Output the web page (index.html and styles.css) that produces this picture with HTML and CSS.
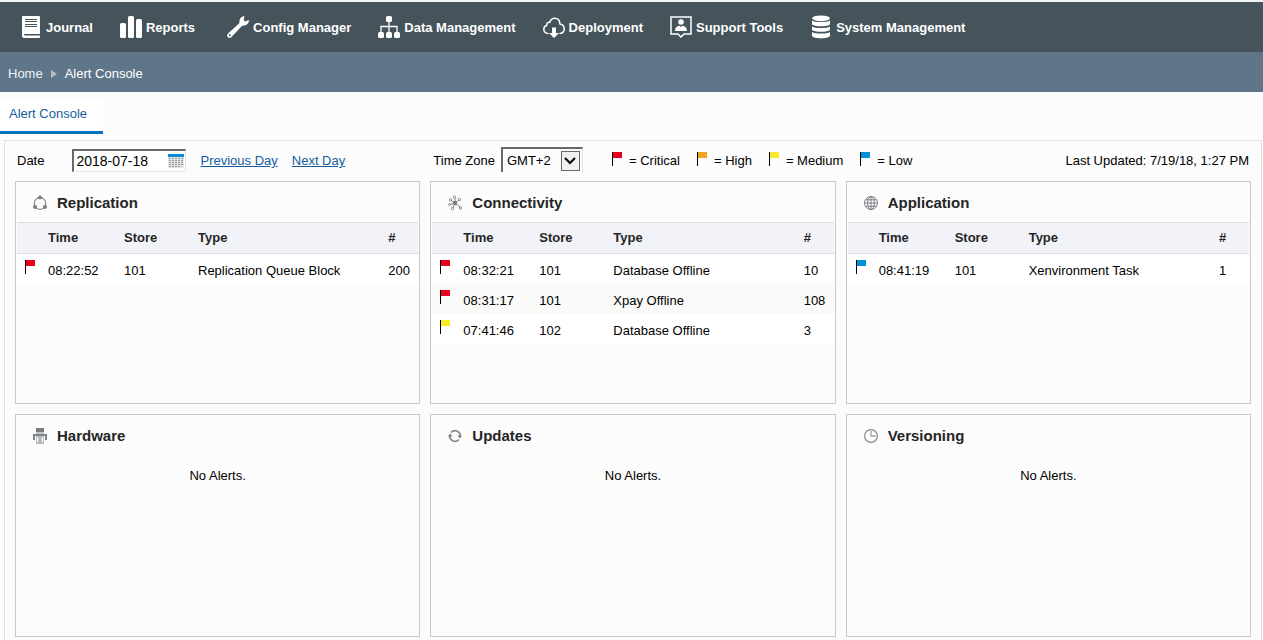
FILE: index.html
```html
<!DOCTYPE html>
<html lang="en">
<head>
    <meta charset="UTF-8">
    <meta name="viewport" content="width=device-width, initial-scale=1.0">
    <title>Alert Console</title>
    <link rel="stylesheet" href="styles.css">
</head>
<body>
    <!-- Main menu -->
    <nav class="main-nav">
        <a href="#">
            <svg width="22" height="22" viewBox="0 0 22 22"><path fill="#fff" d="M3 0h16a1 1 0 0 1 1 1v17H5v1.500h15V21a1 1 0 0 1-1 1H4a2 2 0 0 1-2-2V1a1 1 0 0 1 1-1z"/><path stroke="#45535b" d="M5 3.500h12M5 5.500h12M5 8.500h12M5 10.500h12M4 18.500h16"/></svg>
            <span>Journal</span>
        </a>
        <a href="#">
            <svg width="22" height="22" viewBox="0 0 22 22"><g fill="#fff"><rect y="7" width="6" height="15" rx="1.500"/><rect x="8" width="6" height="22" rx="1.500"/><rect x="16" y="3" width="6" height="19" rx="1.500"/></g></svg>
            <span>Reports</span>
        </a>
        <a href="#" class="wide">
            <svg width="22" height="22" viewBox="0 0 22 22"><path fill="#fff" d="M17.500 0l-.8 4 1.300 1.600 3.800-1.500c.5 2.500-1.600 5.400-4.800 5.300-1 0-1.700.2-2.400.9L5 20.600c-1 1.200-2.500 1.700-3.900.8-1.400-1.200-1.200-2.900 0-4L11.700 7.800c.7-.7.8-1.300.8-2.300C12.400 2.200 15 .1 17.500 0z"/><circle cx="2.800" cy="19.300" r="1" fill="#45535b"/></svg>
            <span>Config Manager</span>
        </a>
        <a href="#">
            <svg width="22" height="22" viewBox="0 0 22 22"><g fill="#fff"><rect x="8" width="6" height="6" rx="1.500"/><rect y="16" width="6" height="6" rx="1.500"/><rect x="8" y="16" width="6" height="6" rx="1.500"/><rect x="16" y="16" width="6" height="6" rx="1.500"/></g><path fill="none" stroke="#fff" stroke-width="1.300" d="M11 5v11M3 16v-5.500h16V16"/></svg>
            <span>Data Management</span>
        </a>
        <a href="#">
            <svg width="22" height="22" viewBox="0 0 22 22"><path fill="none" stroke="#fff" stroke-width="1.500" stroke-linecap="round" d="M5 17.500C2.500 17.600.8 15.600.8 13.300c0-2.200 1.300-3.600 2.900-3.900C3.400 7.400 4.800 6 6.800 6.300 7.600 3.500 9.400 2.300 11.800 2.300c3.200 0 5.200 2.200 5.100 5.600 2.500.4 4.300 2.300 4.300 4.900 0 2.700-1.800 4.500-4.200 4.700"/><path fill="#fff" d="M9 11.500h4V17h3l-5 5-5-5h3z"/></svg>
            <span>Deployment</span>
        </a>
        <a href="#">
            <svg width="22" height="22" viewBox="0 0 22 22"><path fill="none" stroke="#fff" stroke-width="1.500" d="M1 1h20v17h-7l-3 3-3-3H1z"/><circle cx="11" cy="6" r="2.800" fill="#fff"/><path fill="#fff" d="M5 15c0-3.500 2-4.600 4.500-5.200L11 11l1.500-1.200C15 10.400 17 11.500 17 15z"/></svg>
            <span>Support Tools</span>
        </a>
        <a href="#">
            <svg width="22" height="24" viewBox="0 0 22 24"><g fill="#fff"><ellipse cx="11" cy="3.300" rx="9" ry="2.900"/><path d="M2 5.500c3 2 15 2 18 0v3.700c-2 2.700-16 2.700-18 0zM2 11.500c3 2 15 2 18 0v3.200c-2 2.700-16 2.700-18 0zM2 17c3 2 15 2 18 0v4c-2 3.200-16 3.200-18 0z"/></g></svg>
            <span>System Management</span>
        </a>
    </nav>

    <div class="breadcrumb">
        <a href="#">Home</a>
        <svg width="6" height="8" viewBox="0 0 6 8"><path fill="#bcbcbc" d="M0 0l6 4-6 4z"/></svg>
        <span>Alert Console</span>
    </div>

    <div class="tabs">
        <a href="#" class="tab">Alert Console</a>
    </div>

    <main class="panel">
        <!-- Filters and legend -->
        <div class="toolbar">
            <div class="toolbar-date">
                <label for="date">Date</label>
                <div class="date-field">
                    <input type="text" id="date" value="2018-07-18">
                    <button type="button" aria-label="Calendar">
                        <svg width="16" height="14" viewBox="0 0 16 14"><path fill="#e4e4e4" d="M0 3h16v11H0z"/><path stroke="#999" stroke-dasharray="2 1" d="M1 4.500h14M1 6.500h14M1 8.500h14M1 10.500h14M1 12.500h11"/><path fill="#0a8bd6" d="M0 0h16v3H0z"/></svg>
                    </button>
                </div>
                <a href="#">Previous Day</a>
                <a href="#">Next Day</a>
            </div>
            <div class="toolbar-info">
                <label for="timezone">Time Zone</label>
                <div class="select-field">
                    <select id="timezone">
                        <option>GMT+2</option>
                    </select>
                    <span class="select-arrow">
                        <svg width="12" height="8" viewBox="0 0 12 8"><path fill="none" stroke="#000" stroke-width="2" d="M1 1l5 5 5-5"/></svg>
                    </span>
                </div>
                <ul class="legend">
                    <li><span class="flag critical"></span>= Critical</li>
                    <li><span class="flag high"></span>= High</li>
                    <li><span class="flag medium"></span>= Medium</li>
                    <li><span class="flag low"></span>= Low</li>
                </ul>
                <span class="updated">Last Updated: 7/19/18, 1:27 PM</span>
            </div>
        </div>

        <!-- Alert cards -->
        <div class="cards">
            <section class="card">
                <h2>
                    <svg width="14" height="16" viewBox="0 0 14 16"><circle cx="7" cy="8.500" r="5.800" fill="none" stroke="#8a8e92" stroke-width="1.300"/><g fill="#777c81"><circle cx="7" cy="2.500" r="2"/><circle cx="2" cy="12" r="2"/><circle cx="12" cy="12" r="2"/></g></svg>
                    Replication
                </h2>
                <table>
                    <thead>
                        <tr><th class="col-flag"></th><th class="col-time">Time</th><th class="col-store">Store</th><th>Type</th><th class="col-count">#</th></tr>
                    </thead>
                    <tbody>
                        <tr><td><span class="flag critical"></span></td><td>08:22:52</td><td>101</td><td>Replication Queue Block</td><td>200</td></tr>
                    </tbody>
                </table>
            </section>

            <section class="card">
                <h2>
                    <svg width="14" height="16" viewBox="0 0 14 16"><g fill="none" stroke="#85898d"><path d="M7 8L3 5.500M7 8V3M7 8l4-3M7 8l-5 1.500M7 8l-2 5M7 8l5 4"/><circle cx="2.500" cy="5" r="1.200"/><circle cx="6.500" cy="2.300" r="1.200"/><circle cx="11.500" cy="4.500" r="1.200"/><circle cx="1.500" cy="9.500" r="1"/><circle cx="4.500" cy="13.500" r="1.200"/><circle cx="12.500" cy="13" r="1.200"/></g><circle cx="7" cy="8" r="2.200" fill="#777c81"/></svg>
                    Connectivity
                </h2>
                <table>
                    <thead>
                        <tr><th class="col-flag"></th><th class="col-time">Time</th><th class="col-store">Store</th><th>Type</th><th class="col-count">#</th></tr>
                    </thead>
                    <tbody>
                        <tr><td><span class="flag critical"></span></td><td>08:32:21</td><td>101</td><td>Database Offline</td><td>10</td></tr>
                        <tr><td><span class="flag critical"></span></td><td>08:31:17</td><td>101</td><td>Xpay Offline</td><td>108</td></tr>
                        <tr><td><span class="flag medium"></span></td><td>07:41:46</td><td>102</td><td>Database Offline</td><td>3</td></tr>
                    </tbody>
                </table>
            </section>

            <section class="card">
                <h2>
                    <svg width="14" height="16" viewBox="0 0 14 16"><g fill="none" stroke="#7c8085"><circle cx="7" cy="8" r="6.500"/><ellipse cx="7" cy="8" rx="3.300" ry="6.500"/><path d="M7 1.500v13M.5 8h13M1.500 4.800h11M1.500 11.200h11"/></g></svg>
                    Application
                </h2>
                <table>
                    <thead>
                        <tr><th class="col-flag"></th><th class="col-time">Time</th><th class="col-store">Store</th><th>Type</th><th class="col-count">#</th></tr>
                    </thead>
                    <tbody>
                        <tr><td><span class="flag low"></span></td><td>08:41:19</td><td>101</td><td>Xenvironment Task</td><td>1</td></tr>
                    </tbody>
                </table>
            </section>

            <section class="card">
                <h2>
                    <svg width="14" height="16" viewBox="0 0 14 16"><path fill="#777d82" d="M3 0h8v4H3z"/><path fill="#c3c5c7" d="M3 4h8v2H3z"/><path fill="#808589" d="M0 6h14v6h-2V8H2v4H0z"/><path fill="#b7babd" d="M3 8h8v8H3z"/><path fill="#fff" d="M4 9h1v5H4zM9 9h1v5H9z"/></svg>
                    Hardware
                </h2>
                <p class="empty">No Alerts.</p>
            </section>

            <section class="card">
                <h2>
                    <svg width="14" height="16" viewBox="0 0 14 16"><path fill="none" stroke="#85898d" stroke-width="1.700" d="M3 4.500A5.300 5.300 0 0 1 12.300 8M11 11.500A5.300 5.300 0 0 1 1.700 8"/><path fill="#777c81" d="M9.500 7.500H14L12 10.500zM0 8.500h4.500L2 5.500z"/></svg>
                    Updates
                </h2>
                <p class="empty">No Alerts.</p>
            </section>

            <section class="card">
                <h2>
                    <svg width="14" height="16" viewBox="0 0 14 16"><circle cx="7" cy="8" r="6.400" fill="none" stroke="#85898d" stroke-width="1.200"/><path fill="none" stroke="#a0a3a7" stroke-width="1.300" d="M7 3v5h5"/></svg>
                    Versioning
                </h2>
                <p class="empty">No Alerts.</p>
            </section>
        </div>
    </main>
</body>
</html>
```
FILE: styles.css
```css
* {
    box-sizing: border-box;
}

body {
    margin: 0;
    min-height: 100vh;
    display: flex;
    flex-direction: column;
    font-family: "Liberation Sans", Arial, sans-serif;
    font-size: 13px;
    line-height: 16px;
    color: #000;
    background-color: #fcfcfc;
}

svg {
    flex: none;
}

/* Main menu */
.main-nav {
    display: flex;
    align-items: center;
    gap: 27px;
    height: 52px;
    padding-left: 20px;
    border-top: 2px solid #f1f3f4;
    background-color: #45535b;
}

.main-nav a {
    display: flex;
    align-items: center;
    gap: 4px;
    color: #fff;
    font-weight: bold;
    text-decoration: none;
    white-space: nowrap;
}

.main-nav span {
    padding-top: 2px;
}

.main-nav .wide {
    padding-left: 5px;
}

/* Breadcrumb */
.breadcrumb {
    display: flex;
    align-items: center;
    gap: 8px;
    height: 40px;
    padding: 4px 8px 0;
    color: #fff;
    background-color: #5f758a;
}

.breadcrumb a {
    color: #eef2f5;
    text-decoration: none;
}

/* Tabs */
.tabs {
    display: flex;
    padding-top: 9px;
}

.tab {
    padding: 5px 16px 9px 9px;
    border-bottom: 3px solid #0572bb;
    background-color: #fff;
    color: #145c9e;
    text-decoration: none;
}

/* Panel */
.panel {
    flex: 1;
    margin: 6px 1px 0 4px;
    padding: 5px 10px 2px;
    border: 1px solid #dfe0e2;
    border-bottom: none;
}

.toolbar,
.cards {
    display: grid;
    grid-template-columns: repeat(3, 1fr);
    gap: 10px;
}

.toolbar {
    height: 35px;
}

.toolbar a {
    color: #145c9e;
}

.toolbar-date,
.toolbar-info {
    display: flex;
    align-items: center;
    height: 30px;
    white-space: nowrap;
}

.toolbar-date {
    gap: 14px;
    padding-left: 2px;
}

.toolbar-info {
    grid-column: span 2;
    gap: 6px;
    padding: 0 2px 0 3px;
}

.date-field {
    display: flex;
    align-items: center;
    width: 114px;
    height: 23px;
    margin: 0 0 2px 14px;
    padding: 0 1px 0 2px;
    border: 2px solid #696969;
    border-right: 1px solid #e3e3e3;
    border-bottom: 1px solid #e3e3e3;
    background-color: #fff;
}

.date-field input {
    flex: 1;
    min-width: 0;
    padding: 0;
    border: none;
    font-family: inherit;
    font-size: 14px;
    background: none;
}

.date-field button {
    display: flex;
    padding: 0;
    border: none;
    background: none;
    cursor: pointer;
}

.select-field {
    position: relative;
    width: 82px;
    height: 25px;
    margin-bottom: 4px;
}

.select-field select {
    width: 100%;
    height: 100%;
    padding: 1px 24px 0 4px;
    appearance: none;
    border: 2px solid #696969;
    border-right: 1px solid #e3e3e3;
    border-bottom: none;
    border-radius: 0;
    background-color: #fcfcfc;
    color: #000;
    font-family: inherit;
    font-size: 13px;
}

.select-arrow {
    position: absolute;
    top: 4px;
    right: 3px;
    display: flex;
    align-items: center;
    justify-content: center;
    width: 19px;
    height: 20px;
    border: 1px solid #696969;
    background-color: #f0f0f0;
    pointer-events: none;
}

.legend {
    display: flex;
    gap: 17px;
    margin: 0 0 0 23px;
    padding: 0;
    list-style: none;
}

.legend li {
    display: flex;
    gap: 7px;
}

.legend .flag {
    margin-top: -1px;
}

.updated {
    margin-left: auto;
}

/* Severity flags */
.flag {
    display: block;
    width: 10px;
    height: 14px;
    border-left: 1px solid #000;
}

.flag::before {
    content: "";
    display: block;
    height: 6px;
}

.critical::before {
    background-color: #e8001c;
}

.high::before {
    background-color: #f3a41e;
}

.medium::before {
    background-color: #fbea2c;
}

.low::before {
    background-color: #058fd6;
}

/* Cards */
.card {
    min-height: 223px;
    padding: 0 1px;
    border: 1px solid #c8c9cb;
}

.card h2 {
    display: flex;
    align-items: center;
    gap: 10px;
    height: 40px;
    margin: 0;
    padding: 2px 16px 0;
    color: #252525;
    font-size: 15px;
}

.empty {
    margin: 0;
    padding-top: 13px;
    text-align: center;
}

/* Tables */
table {
    width: 100%;
    border-collapse: collapse;
    table-layout: fixed;
}

th, td {
    padding: 0 0 0 8px;
    text-align: left;
}

th {
    height: 31px;
    border-top: 1px solid #dcdee0;
    border-bottom: 1px solid #dcdee0;
    background-color: #f2f3f8;
    color: #252525;
}

td {
    height: 30px;
    padding-top: 4px;
    background-color: #fff;
}

tr:nth-child(even) td {
    background-color: #fafaf9;
}

td .flag {
    margin-bottom: 8px;
}

.col-flag {
    width: 23px;
}

.col-time {
    width: 76px;
}

.col-store {
    width: 74px;
}

.col-count {
    width: 38px;
}
```
